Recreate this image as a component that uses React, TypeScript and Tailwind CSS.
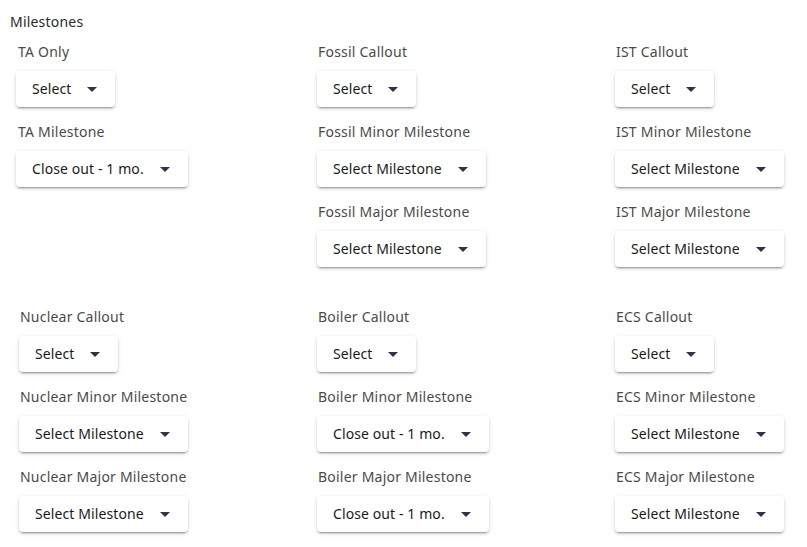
import React from "react";

const Arrow = () => (
  <svg width="10" height="5" viewBox="0 0 10 5" className="shrink-0">
    <path d="M0 0 L10 0 L5 5 Z" fill="#2c3545" />
  </svg>
);

const Dropdown = ({ value }: { value: string }) => (
  <div className="flex h-[36px] w-fit items-center gap-[16px] rounded-[4px] bg-white pl-[16px] pr-[18px] text-[14px] tracking-[0.1px] text-[#1a1a1a] shadow-[0_3px_1px_-2px_rgba(0,0,0,0.2),0_2px_2px_0_rgba(0,0,0,0.14),0_1px_5px_0_rgba(0,0,0,0.12)]">
    <span className="leading-[20px]">{value}</span>
    <Arrow />
  </div>
);

const Field = ({ label, value, lp }: { label: string; value: string; lp?: boolean }) => (
  <div className="flex flex-col">
    <div className={`h-[20px] text-[14px] leading-[20px] tracking-[0.22px] text-[#4a4a4a] ${lp ? "pl-[2px]" : "pl-[1px]"}`}>{label}</div>
    <div className="mt-[9px]">
      <Dropdown value={value} />
    </div>
  </div>
);

type F = { label: string; value: string; lp?: boolean };

const Column = ({ fields, width }: { fields: F[]; width: string }) => (
  <div className={`flex flex-col gap-[15px] ${width}`}>
    {fields.map((f, i) => (
      <Field key={i} {...f} />
    ))}
  </div>
);

export default function App() {
  return (
    <div
      className="h-[547px] w-[807px] overflow-hidden bg-white"
      style={{ fontFamily: '"Noto Sans", "Open Sans", sans-serif' }}
    >
      <div className="pl-[10px] pt-[12px] text-[14px] leading-[20px] tracking-[0.2px] text-[#2a2a2a]">Milestones</div>
      <div className="mt-[10px] flex pl-[16px]">
        <Column
          width="w-[301px]"
          fields={[
            { label: "TA Only", value: "Select", lp: true },
            { label: "TA Milestone", value: "Close out - 1 mo.", lp: true },
          ]}
        />
        <Column
          width="w-[298px]"
          fields={[
            { label: "Fossil Callout", value: "Select" },
            { label: "Fossil Minor Milestone", value: "Select Milestone" },
            { label: "Fossil Major Milestone", value: "Select Milestone" },
          ]}
        />
        <Column
          width="w-[180px]"
          fields={[
            { label: "IST Callout", value: "Select" },
            { label: "IST Minor Milestone", value: "Select Milestone" },
            { label: "IST Major Milestone", value: "Select Milestone" },
          ]}
        />
      </div>
      <div className="mt-[40px] flex pl-[19px]">
        <Column
          width="w-[298px]"
          fields={[
            { label: "Nuclear Callout", value: "Select" },
            { label: "Nuclear Minor Milestone", value: "Select Milestone" },
            { label: "Nuclear Major Milestone", value: "Select Milestone" },
          ]}
        />
        <Column
          width="w-[298px]"
          fields={[
            { label: "Boiler Callout", value: "Select" },
            { label: "Boiler Minor Milestone", value: "Close out - 1 mo." },
            { label: "Boiler Major Milestone", value: "Close out - 1 mo." },
          ]}
        />
        <Column
          width="w-[180px]"
          fields={[
            { label: "ECS Callout", value: "Select" },
            { label: "ECS Minor Milestone", value: "Select Milestone" },
            { label: "ECS Major Milestone", value: "Select Milestone" },
          ]}
        />
      </div>
    </div>
  );
}
